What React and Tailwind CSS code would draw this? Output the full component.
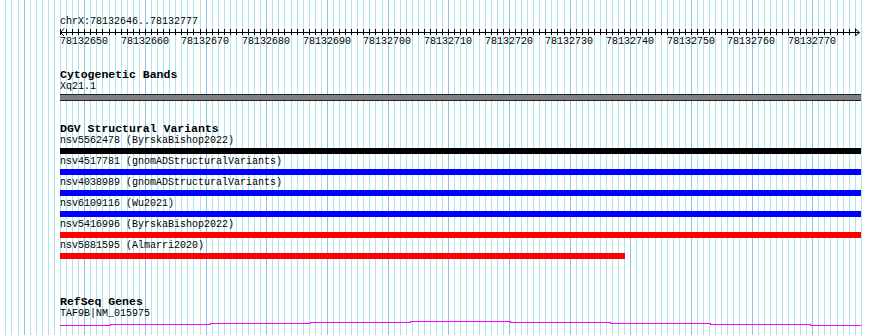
import React from "react";

const PX = 6.0667;
const X0 = 60;

function Grid() {
  const lines = [];
  for (let k = -9; k <= 132; k++) {
    const x = Math.round(X0 + k * PX) + 0.5;
    const major = ((k - 4) % 10 + 10) % 10 === 0;
    lines.push(
      <line
        key={k}
        x1={x}
        x2={x}
        y1={0}
        y2={335}
        stroke={major ? "#86c6e8" : "#a9e7ec"}
        strokeWidth={1}
      />
    );
  }
  return (
    <svg
      className="absolute left-0 top-0"
      width={862}
      height={335}
      shapeRendering="crispEdges"
    >
      {lines}
    </svg>
  );
}

function Ruler() {
  const ticks = [];
  for (let k = 0; k <= 131; k++) {
    const x = Math.round(k * PX) + 0.5;
    ticks.push(<line key={k} x1={x} x2={x} y1={1} y2={7} stroke="#000" />);
  }
  return (
    <svg width={802} height={8} className="block" shapeRendering="crispEdges">
      <line x1={0} x2={800} y1={4.5} y2={4.5} stroke="#000" />
      {ticks}
      <polyline points="4,0.5 0.5,4.5 4,8" fill="none" stroke="#000" shapeRendering="auto" />
      <polyline points="795,0.5 799.5,4.5 795,8" fill="none" stroke="#000" shapeRendering="auto" />
    </svg>
  );
}

const rows = [
  { label: "nsv5562478 (ByrskaBishop2022)", color: "bg-black", w: "w-[801px]" },
  { label: "nsv4517781 (gnomADStructuralVariants)", color: "bg-[#0000ff]", w: "w-[801px]" },
  { label: "nsv4038989 (gnomADStructuralVariants)", color: "bg-[#0000ff]", w: "w-[801px]" },
  { label: "nsv6109116 (Wu2021)", color: "bg-[#0000ff]", w: "w-[801px]" },
  { label: "nsv5416996 (ByrskaBishop2022)", color: "bg-[#ff0000]", w: "w-[801px]" },
  { label: "nsv5881595 (Almarri2020)", color: "bg-[#ff0000]", w: "w-[565px]" },
];

export default function App() {
  const labels = [];
  for (let i = 0; i <= 12; i++) labels.push(78132650 + i * 10);
  return (
    <div className="relative w-[890px] h-[335px] bg-white overflow-hidden font-['Liberation_Mono',monospace] text-black">
      <Grid />
      <div className="relative pl-[60px]">
        <div className="pt-[16px] text-[10px] leading-[12px] h-[28px]">chrX:78132646..78132777</div>
        <Ruler />
        <div className="relative h-[12px] text-[10px] leading-[12px]">
          {labels.map((l, i) => (
            <span key={l} className="absolute top-0" style={{ left: Math.round(i * 10 * PX) }}>
              {l}
            </span>
          ))}
        </div>

        <div className="mt-[20px] text-[11.5px] leading-[13px] font-bold">Cytogenetic Bands</div>
        <div className="text-[10px] leading-[12px]">Xq21.1</div>
        <div className="mt-[1px] w-[801px] h-[7px] bg-[#808080] border-y border-[#222]"></div>

        <div className="mt-[21px] text-[11.5px] leading-[13px] font-bold">DGV Structural Variants</div>
        {rows.map((r) => (
          <div key={r.label} className="pb-[2px]">
            <div className="text-[10px] leading-[12px] whitespace-pre">{r.label}</div>
            <div className={`mt-[1px] h-[6px] ${r.color} ${r.w}`}></div>
          </div>
        ))}

        <div className="mt-[34px] text-[11.5px] leading-[13px] font-bold">RefSeq Genes</div>
        <div className="text-[10px] leading-[12px]">TAF9B|NM_015975</div>
        <svg width={802} height={8} className="block" shapeRendering="crispEdges">
          <polyline
            points="0,5.5 50,5.5 50,4.5 150,4.5 150,3.5 250,3.5 250,2.5 350,2.5 350,1.5 450,1.5 450,2.5 550,2.5 550,3.5 650,3.5 650,4.5 750,4.5 750,5.5 801,5.5"
            fill="none"
            stroke="#ff00ff"
            strokeWidth={1}
          />
        </svg>
      </div>
    </div>
  );
}
